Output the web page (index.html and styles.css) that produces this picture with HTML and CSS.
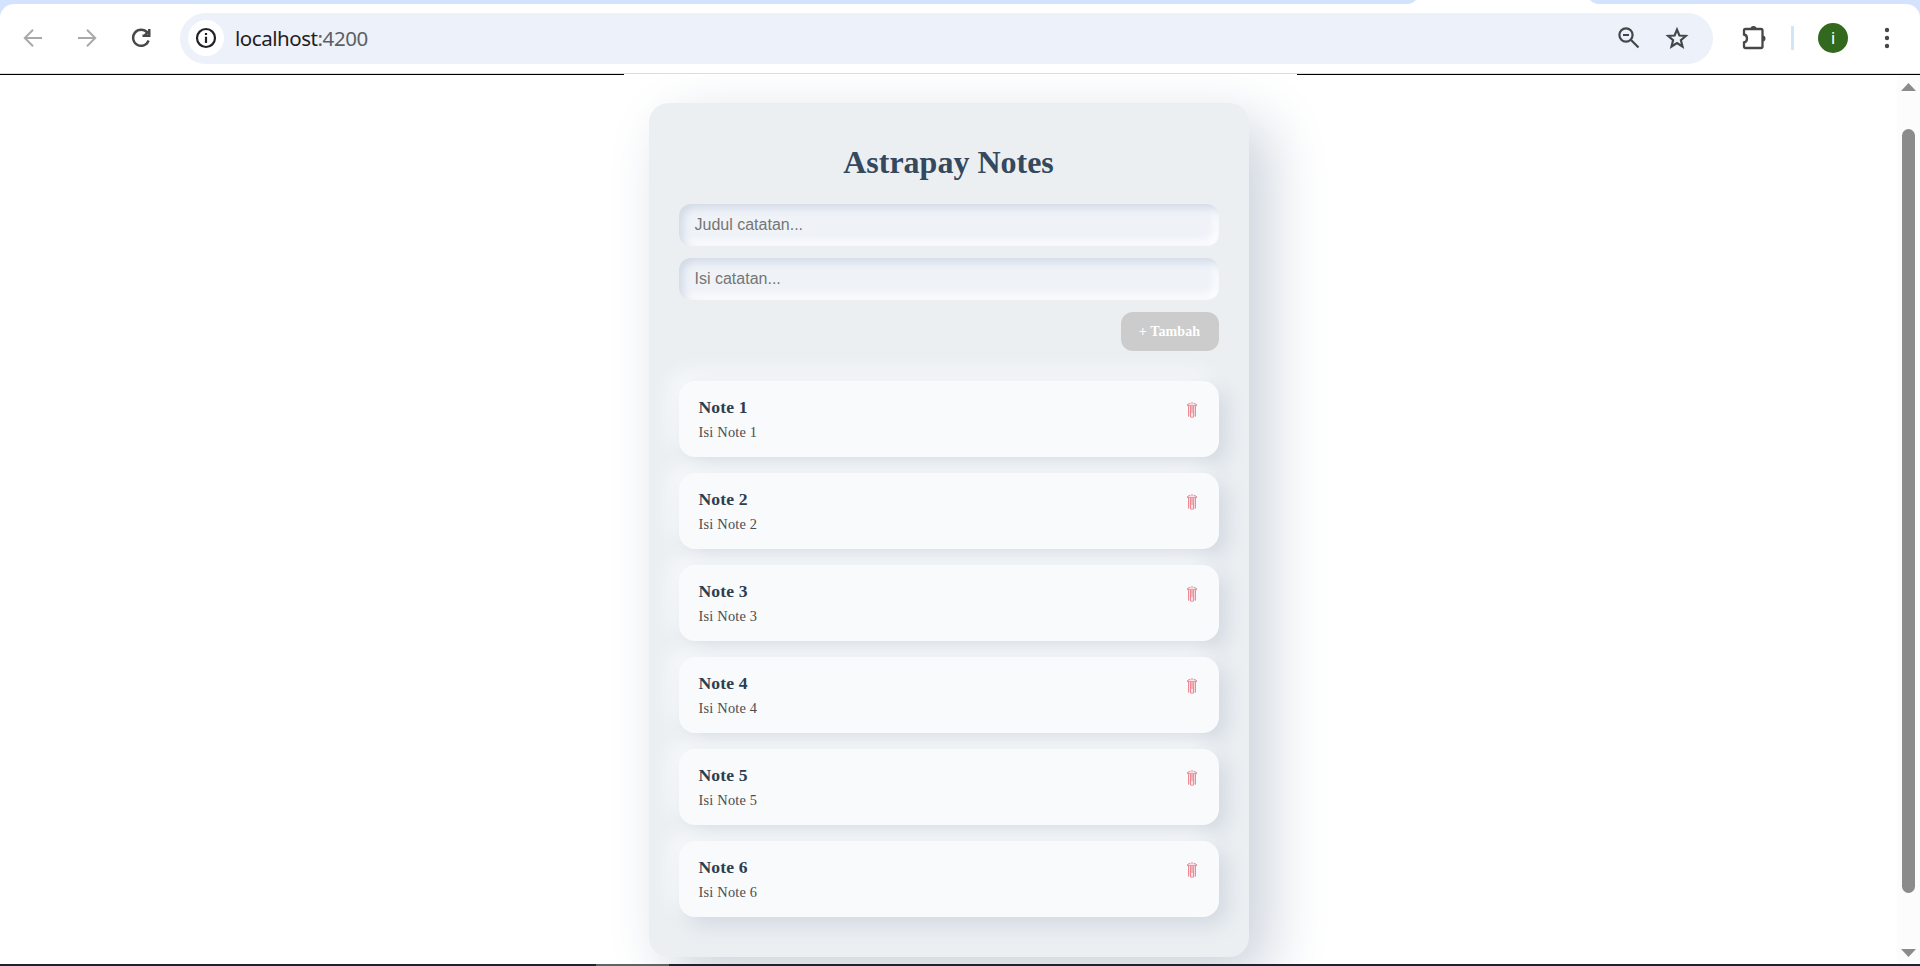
FILE: index.html
```html
<!DOCTYPE html>
<html lang="id">
<head>
<meta charset="utf-8">
<title>Astrapay Notes</title>
<link rel="stylesheet" href="styles.css">
</head>
<body>
<svg class="defs" width="0" height="0" aria-hidden="true">
  <symbol id="trash" viewBox="0 0 10 16">
    <path d="M.5 4V2.500L3 1.300M7 1.300L9.500 2.500V4M3.500 1.300Q5 .6 6.500 1.300M1 3.300H9M1.500 3.500V14.500M8.500 14.500V3.500M3.500 4V15M5 4V11M6.600 4V15M3.500 15Q5 15.600 6.600 15" fill="none" stroke="#e8606f" stroke-width=".7"/>
    <path d="M1.500 3.500H8.500V14.500H1.500Z" fill="#ea5d70" opacity=".16"/>
  </symbol>
</svg>
<div class="browser">
  <div class="tabstrip"><div class="active-tab"></div></div>
  <header class="toolbar">
    <nav class="nav">
      <svg width="24" height="24" viewBox="0 0 24 24" class="muted"><path d="M21 12H4M12 3.800L3.800 12L12 20.200"/></svg>
      <svg width="24" height="24" viewBox="0 0 24 24" class="muted"><path d="M3 12H20M12 3.800L20.200 12L12 20.200"/></svg>
      <svg width="24" height="24" viewBox="0 0 24 24" class="reload"><path d="M18.200 6.600A8 8 0 1 0 19.600 14.500"/><path d="M20.300 3V9.700H13.500M20 5L15.500 9.500"/></svg>
    </nav>
    <div class="omnibox">
      <span class="site-info"><svg width="24" height="24" viewBox="0 0 24 24"><circle cx="12" cy="12" r="9"/><path d="M12 10.800V17M12 7V9"/></svg></span>
      <span class="url">localhost<span class="port">:4200</span></span>
      <svg class="zoom-icon" width="24" height="24" viewBox="0 0 24 24"><circle cx="9" cy="9" r="6.600"/><path d="M13.800 13.800L21.500 21.500M6 9H12"/></svg>
      <svg class="star-icon" width="24" height="24" viewBox="0 0 24 24"><path d="M12 3.600L14.400 9.500L20.800 10L15.900 14.200L17.500 20.500L12 17L6.500 20.500L8.100 14.200L3.200 10L9.600 9.500Z"/></svg>
    </div>
    <svg class="puzzle" width="26" height="26" viewBox="0 0 26 26"><path class="line" d="M3 5.500Q3 4 4.500 4H20Q21.500 4 21.500 5.500V21.500Q21.500 23 20 23H4.500Q3 23 3 21.500V17.500Q6 17 6 13.500Q6 10 3 9.500Z"/><path class="solid" d="M9.500 4a3 3 0 0 1 6 0zM21.500 10.500a3 3 0 0 1 0 6z"/></svg>
    <span class="divider"></span>
    <span class="avatar">i</span>
    <svg class="menu" width="6" height="24" viewBox="0 0 6 24"><circle cx="3" cy="4" r="2.200"/><circle cx="3" cy="12" r="2.200"/><circle cx="3" cy="20" r="2.200"/></svg>
  </header>
  <div class="edge"></div>
  <div class="viewport">
    <main class="page">
      <section class="card">
        <h1>Astrapay Notes</h1>
        <form class="form">
          <input type="text" placeholder="Judul catatan...">
          <input type="text" placeholder="Isi catatan...">
          <button type="button" disabled>+ Tambah</button>
        </form>
        <div class="notes">
          <article class="note"><div><h2>Note 1</h2><p>Isi Note 1</p></div><svg class="trash"><use href="#trash"/></svg></article>
          <article class="note"><div><h2>Note 2</h2><p>Isi Note 2</p></div><svg class="trash"><use href="#trash"/></svg></article>
          <article class="note"><div><h2>Note 3</h2><p>Isi Note 3</p></div><svg class="trash"><use href="#trash"/></svg></article>
          <article class="note"><div><h2>Note 4</h2><p>Isi Note 4</p></div><svg class="trash"><use href="#trash"/></svg></article>
          <article class="note"><div><h2>Note 5</h2><p>Isi Note 5</p></div><svg class="trash"><use href="#trash"/></svg></article>
          <article class="note"><div><h2>Note 6</h2><p>Isi Note 6</p></div><svg class="trash"><use href="#trash"/></svg></article>
        </div>
      </section>
    </main>
    <div class="scrollbar">
      <svg width="15" height="8"><path d="M0 8L7.500 0L15 8Z"/></svg>
      <div class="thumb"></div>
      <svg width="15" height="8"><path d="M0 0H15L7.500 8Z"/></svg>
    </div>
  </div>
  <div class="taskbar-edge"></div>
</div>
</body>
</html>
```
FILE: styles.css
```css
* { box-sizing: border-box; }
body { margin: 0; background: #fff; font-family: "Liberation Serif", "Times New Roman", serif; }
.defs { position: absolute; }
.browser { display: flex; flex-direction: column; height: 966px; overflow: hidden; background: #d3e2fd; }

.tabstrip { height: 4px; padding-left: 1409px; flex: none; }
.active-tab { width: 188px; height: 4px; background: #fff; clip-path: polygon(7px 0, 181px 0, 184px 2.5px, 188px 4px, 0 4px, 4px 2.5px); }
.toolbar { flex: none; height: 69px; display: flex; align-items: center; padding: 0 30px 1px 21px; background: #fff; border-radius: 14px 14px 0 0; }
.nav { display: flex; gap: 30px; width: 159px; flex: none; }
.nav svg { fill: none; stroke: #474747; stroke-width: 2.4; }
.nav .muted { stroke: #a9a9a9; stroke-width: 2; }
.omnibox { display: flex; align-items: center; width: 1533px; height: 51px; border-radius: 26px; background: #ecf1fa; padding: 0 24px 0 8px; }
.omnibox svg { fill: none; stroke: #444749; stroke-width: 2.2; }
.site-info { display: flex; align-items: center; justify-content: center; width: 36px; height: 36px; border-radius: 50%; background: #fff; }
.omnibox .site-info svg { stroke: #202124; }
.url { margin-left: 11px; font: 20.5px "Noto Sans", sans-serif; letter-spacing: -0.45px; color: #1f2024; flex: 1; }
.port { color: #5c5f63; }
.star-icon { margin-left: 24px; }
.puzzle { margin-left: 28px; }
.puzzle .line { fill: none; stroke: #474747; stroke-width: 2.3; }
.puzzle .solid { fill: #474747; }
.divider { width: 3px; height: 24px; background: #d3e3fa; margin-left: 24px; }
.avatar { display: flex; align-items: center; justify-content: center; width: 30px; height: 30px; margin-left: 24px; border-radius: 50%; background: #33691e; color: #fff; font: 17px Roboto, sans-serif; }
.menu { margin-left: auto; fill: #474747; }

.edge { flex: none; height: 2px; background: linear-gradient(#dcdde0 0 1px, transparent 1px), linear-gradient(90deg, #000 624px, #fff 624px 1297px, #000 1297px); }
.viewport { flex: 1; min-height: 0; display: flex; overflow: hidden; background: #fff; }
.page { flex: 1; display: flex; justify-content: center; align-items: flex-start; padding-top: 28px; overflow: hidden; }
.card { width: 600px; height: 854px; padding: 41px 30px 0; border-radius: 20px; background: #ebeff2; box-shadow: 20px 20px 60px #cbd2dc, -20px -20px 60px #fff; }
h1 { margin: 0 0 23px; text-align: center; font-size: 32px; line-height: 37px; color: #34495e; }
.form { display: flex; flex-direction: column; gap: 12px; }
.form input { height: 42px; border: 0; border-radius: 12px; padding: 0 16px; background: #eff3f8; box-shadow: inset 4px 4px 8px #d1d9e6, inset -4px -4px 8px #fff; font: 16px "Liberation Sans", Arial, sans-serif; }
.form input::placeholder { color: #757575; }
.form button { align-self: flex-end; width: 98px; height: 39px; border: 0; padding: 0; border-radius: 12px; background: #ccc; color: #fff; font: bold 14px "Liberation Serif", serif; letter-spacing: 0.1px; }
.notes { display: flex; flex-direction: column; gap: 16px; margin-top: 30px; }
.note { display: flex; justify-content: space-between; height: 76px; padding: 16px 20px; border-radius: 16px; background: #f8fafc; box-shadow: 8px 8px 20px #d3d9e2, -8px -8px 20px #f9fbfc; }
h2 { margin: 0; font-size: 17.6px; line-height: 21px; color: #2c3e50; letter-spacing: 0.15px; }
.note p { margin: 6px 0 0; font-size: 14.4px; line-height: 17px; color: #4c4c4c; letter-spacing: 0.2px; }
.trash { width: 10px; height: 16px; margin: 5px 2px 0 0; }

.scrollbar { width: 23px; flex: none; background: #fcfcfc; display: flex; flex-direction: column; align-items: center; padding: 8px 0 7px; }
.scrollbar svg { fill: #8b8b8b; flex: none; }
.thumb { width: 13px; height: 764px; margin: 38px 0 auto; border-radius: 7px; background: #8b8b8b; }
.taskbar-edge { flex: none; height: 2px; background: linear-gradient(90deg, #1d2430 596px, #5d6468 596px 669px, #1d2430 669px); }
```
